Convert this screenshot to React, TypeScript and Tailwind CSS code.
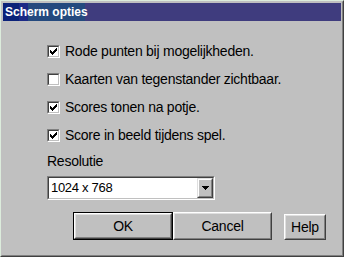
import React from "react";

const font = { fontFamily: '"Liberation Sans", Arial, sans-serif' };

function Check({ checked }: { checked: boolean }) {
  return (
    <div className="w-[13px] h-[13px] border border-t-[#808080] border-l-[#808080] border-r-white border-b-white shrink-0">
      <div className="w-full h-full border border-t-[#404040] border-l-[#404040] border-r-[#c0c0c0] border-b-[#c0c0c0] bg-white flex items-center justify-center">
        {checked && (
          <svg width="7" height="7" viewBox="0 0 7 7" shapeRendering="crispEdges">
            <path
              fill="#000"
              d="M6 0h1v3h-1zM5 1h1v3h-1zM4 2h1v3h-1zM0 2h1v3h-1zM1 3h1v3h-1zM2 4h1v3h-1zM3 3h1v3h-1z"
            />
          </svg>
        )}
      </div>
    </div>
  );
}

function Row({ checked, label }: { checked: boolean; label: string }) {
  return (
    <div className="h-[28px] flex items-center">
      <Check checked={checked} />
      <span className="ml-[5px] text-[14px] leading-[16px] tracking-[-0.25px] text-black whitespace-nowrap">
        {label}
      </span>
    </div>
  );
}

function Btn({
  label,
  w,
  h,
  isDefault,
}: {
  label: string;
  w: string;
  h: string;
  isDefault?: boolean;
}) {
  const inner = (
    <div className="w-full h-full border border-t-white border-l-white border-r-[#404040] border-b-[#404040]">
      <div className="w-full h-full border border-t-[#dfdfdf] border-l-[#dfdfdf] border-r-[#808080] border-b-[#808080] flex items-center justify-center text-[14px] tracking-[-0.25px] text-black">
        {label}
      </div>
    </div>
  );
  return (
    <div className={`${w} ${h} ${isDefault ? "border border-black" : ""}`}>{inner}</div>
  );
}

export default function App() {
  return (
    <div
      className="w-[344px] h-[257px] bg-[#c0c0c0] border border-t-[#dcecdc] border-l-[#dcecdc] border-r-[#404040] border-b-[#404040] flex flex-col"
      style={font}
    >
      <div className="flex-1 flex flex-col border border-t-[#c0c0c0] border-l-[#c0c0c0] border-r-[#808080] border-b-[#808080] p-[1px]">
        <div className="h-[18px] flex items-center bg-[linear-gradient(to_right,#0b2279_0px,#0b2279_16px,#1c2a86_16px,#1c2a86_25px,#244a7e_25px,#244a7e_82px,#3f3c7e_82px,#3f3c7e_100%)]">
          <span className="ml-[2px] text-white font-bold text-[12px] leading-[14px]">Scherm opties</span>
        </div>
        <div className="flex flex-col pl-[44px] pt-[16px]">
          <Row checked label="Rode punten bij mogelijkheden." />
          <Row checked={false} label="Kaarten van tegenstander zichtbaar." />
          <Row checked label="Scores tonen na potje." />
          <Row checked label="Score in beeld tijdens spel." />
          <div className="mt-[4px] h-[16px] text-[14px] leading-[16px] tracking-[-0.25px] text-black">Resolutie</div>
          <div className="mt-[7px] w-[168px] h-[24px] border border-t-[#808080] border-l-[#808080] border-r-white border-b-white">
            <div className="w-full h-full border border-t-[#404040] border-l-[#404040] border-r-[#c0c0c0] border-b-[#c0c0c0] bg-white flex items-center">
              <span className="flex-1 pl-[2px] text-[13px] tracking-[-0.3px] text-black">1024 x 768</span>
              <div className="w-[16px] h-[20px] border border-t-[#dfdfdf] border-l-[#dfdfdf] border-r-[#404040] border-b-[#404040] bg-[#c0c0c0]">
                <div className="w-full h-full border border-t-white border-l-white border-r-[#808080] border-b-[#808080] flex items-center justify-center">
                  <svg width="7" height="4" viewBox="0 0 7 4" shapeRendering="crispEdges">
                    <path fill="#000" d="M0 0h7v1h-7zM1 1h5v1h-5zM2 2h3v1h-3zM3 3h1v1h-1z" />
                  </svg>
                </div>
              </div>
            </div>
          </div>
          <div className="mt-[12px] ml-[26px] flex items-end">
            <Btn label="OK" w="w-[100px]" h="h-[28px]" isDefault />
            <Btn label="Cancel" w="w-[99px]" h="h-[28px]" />
            <div className="ml-[12px]">
              <Btn label="Help" w="w-[42px]" h="h-[26px]" />
            </div>
          </div>
        </div>
      </div>
    </div>
  );
}
